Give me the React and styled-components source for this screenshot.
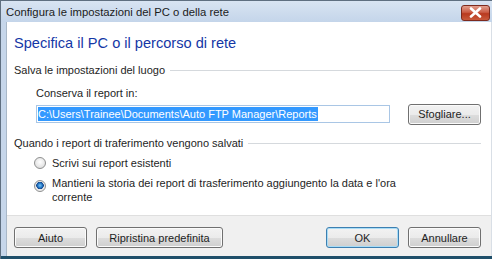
import React from "react";
import styled, { createGlobalStyle } from "styled-components";

const Global = createGlobalStyle`
  html, body { margin: 0; padding: 0; overflow: hidden; }
  body { font-family: "Liberation Sans", Arial, sans-serif; font-size: 11px; color: #1e1e1e; }
`;

const App = () => {
    return (
        <Window>
            <Global />
            <TitleBar>
                <Title>Configura le impostazioni del PC o della rete</Title>
                <CloseButton>
                    <svg width="13" height="11" viewBox="0 0 13 11">
                        <path d="M2 1.5 L11 9.5 M11 1.5 L2 9.5" stroke="#fff" strokeWidth="2.6" strokeLinecap="round" />
                    </svg>
                </CloseButton>
            </TitleBar>
            <Frame>
                <Content>
                    <Body>
                        <Heading>Specifica il PC o il percorso di rete</Heading>
                        <GroupTitle>
                            <span>Salva le impostazioni del luogo</span>
                            <Rule />
                        </GroupTitle>
                        <Indent>
                            <Label>Conserva il report in:</Label>
                            <PathRow>
                                <PathInput>
                                    <Selected>C:\Users\Trainee\Documents\Auto FTP Manager\Reports</Selected>
                                </PathInput>
                                <Button $width={73}>Sfogliare...</Button>
                            </PathRow>
                        </Indent>
                        <GroupTitle>
                            <span>Quando i report di traferimento vengono salvati</span>
                            <Rule />
                        </GroupTitle>
                        <Options>
                            <Option>
                                <Radio />
                                <span>Scrivi sui report esistenti</span>
                            </Option>
                            <Option>
                                <Radio $checked />
                                <span>
                                    Mantieni la storia dei report di trasferimento aggiungento la data e l'ora
                                    <br />
                                    corrente
                                </span>
                            </Option>
                        </Options>
                    </Body>
                    <Footer>
                        <ButtonGroup>
                            <Button $width={73}>Aiuto</Button>
                            <Button $width={127}>Ripristina predefinita</Button>
                        </ButtonGroup>
                        <ButtonGroup>
                            <Button $width={73} $default>OK</Button>
                            <Button $width={73}>Annullare</Button>
                        </ButtonGroup>
                    </Footer>
                </Content>
            </Frame>
            <BottomEdge />
        </Window>
    );
};

const Window = styled.div`
    width: 492px;
    height: 259px;
    display: flex;
    flex-direction: column;
    box-sizing: border-box;
    border-left: 1px solid #5f6f80;
    background: #c6d6ea;
`;

const TitleBar = styled.div`
    height: 22px;
    flex: none;
    display: flex;
    align-items: center;
    justify-content: space-between;
    padding: 0 2px 0 5px;
    background: linear-gradient(#d8e4f2, #c4d5ea);
    border-top: 1px solid #5f6f80;
    box-sizing: border-box;
`;

const Title = styled.div`
    font-size: 11.3px;
    color: #1b1b1b;
    margin-top: 1px;
`;

const CloseButton = styled.div`
    width: 29px;
    height: 16px;
    margin-top: 2px;
    box-sizing: border-box;
    display: flex;
    align-items: center;
    justify-content: center;
    border: 1px solid #7d2a1e;
    border-radius: 3px;
    background: linear-gradient(#e2a08f, #cb5c45 45%, #b8391f 55%, #c95a3c);
`;

const Frame = styled.div`
    flex: 1;
    display: flex;
    padding-left: 5px;
    min-height: 0;
`;

const Content = styled.div`
    flex: 1;
    display: flex;
    flex-direction: column;
    background: #fff;
    border-left: 1px solid #a9b8c8;
    border-right: 1px solid #d9dfe6;
`;

const Body = styled.div`
    flex: 1;
    padding: 11px 10px 0 7px;
`;

const Heading = styled.div`
    font-size: 14.6px;
    color: #1437a6;
    line-height: 20px;
    margin-bottom: 9px;
`;

const GroupTitle = styled.div`
    display: flex;
    align-items: center;
    gap: 5px;
    height: 16px;
    white-space: nowrap;
`;

const Rule = styled.div`
    flex: 1;
    height: 1px;
    background: #d5d9dd;
    margin-top: 1px;
`;

const Indent = styled.div`
    padding: 8px 0 11px 22px;
`;

const Label = styled.div`
    line-height: 14px;
    margin-bottom: 4px;
`;

const PathRow = styled.div`
    display: flex;
    align-items: center;
    justify-content: space-between;
    height: 20px;
`;

const PathInput = styled.div`
    width: 354px;
    height: 18px;
    box-sizing: border-box;
    border: 1px solid #a9c6e5;
    padding: 1px 1px;
    display: flex;
    align-items: center;
`;

const Selected = styled.span`
    background: #3399ff;
    color: #fff;
    line-height: 14px;
    padding-right: 1px;
    white-space: nowrap;
`;

const Options = styled.div`
    padding-left: 20px;
    padding-top: 5px;
    display: flex;
    flex-direction: column;
    gap: 6px;
`;

const Option = styled.div`
    display: flex;
    align-items: flex-start;
    gap: 6px;
    line-height: 14px;
`;

const Radio = styled.span`
    flex: none;
    width: 12px;
    height: 12px;
    margin-top: ${(p) => (p.$checked ? 4 : 1)}px;
    border-radius: 50%;
    box-sizing: border-box;
    border: 1px solid #8e8f8f;
    background: ${(p) =>
        p.$checked
            ? "radial-gradient(circle at 50% 45%, #7fc4f2 0, #2d83cf 2px, #12458c 3.5px, #e8e8e8 4px, #f6f6f6 100%)"
            : "radial-gradient(circle at 50% 40%, #ffffff 0, #e2e2e2 70%, #cfcfcf 100%)"};
`;

const Footer = styled.div`
    height: 41px;
    flex: none;
    box-sizing: border-box;
    background: #f0f0f0;
    border-top: 1px solid #dfdfdf;
    display: flex;
    align-items: flex-start;
    justify-content: space-between;
    padding: 11px 10px 0 7px;
`;

const ButtonGroup = styled.div`
    display: flex;
    gap: 9px;
`;

const Button = styled.div`
    width: ${(p) => p.$width}px;
    height: 21px;
    box-sizing: border-box;
    border: 1px solid ${(p) => (p.$default ? "#3c7fb1" : "#707070")};
    box-shadow: inset 0 0 0 1px ${(p) => (p.$default ? "#a8dcf6" : "#fbfbfb")};
    border-radius: 3px;
    background: linear-gradient(#f2f2f2, #ebebeb 50%, #dddddd 51%, #cfcfcf);
    display: flex;
    align-items: center;
    justify-content: center;
    color: #1e1e1e;
`;

const BottomEdge = styled.div`
    height: 3px;
    flex: none;
    background: #1f4f6a;
`;

export default App;
